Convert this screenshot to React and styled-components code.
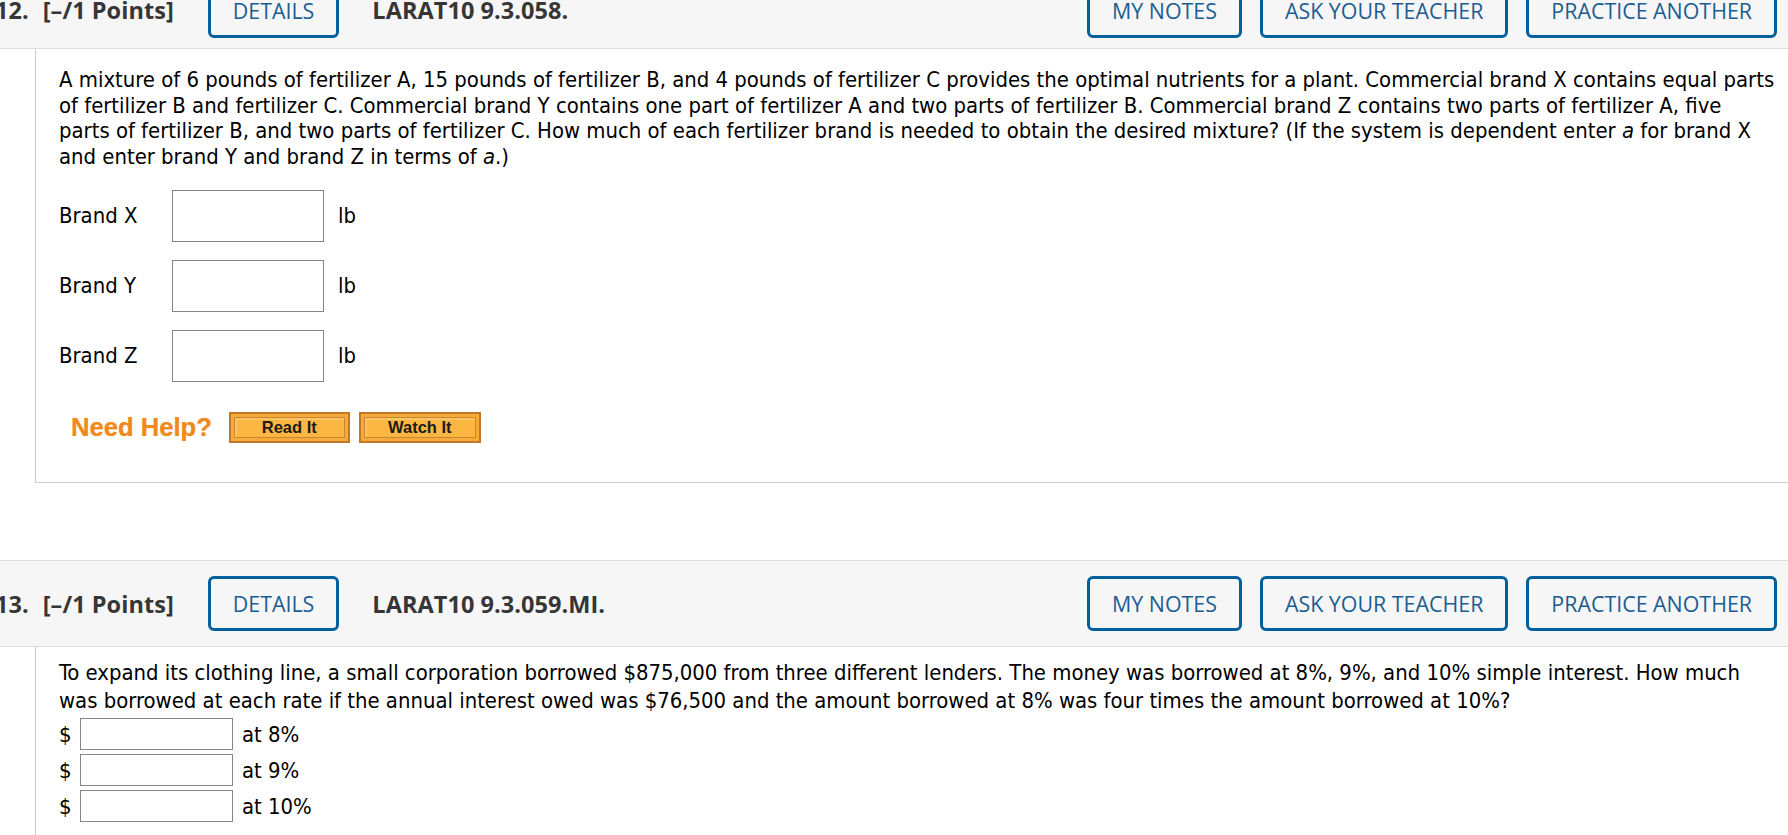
import React from 'react';
import styled, { createGlobalStyle } from 'styled-components';

const GlobalStyle = createGlobalStyle`
  html, body {
    margin: 0;
    padding: 0;
    background: #ffffff;
  }
  body {
    font-family: "DejaVu Sans Condensed", "DejaVu Sans", Verdana, sans-serif;
    color: #000;
    overflow: hidden;
  }
`;

const Page = styled.div`
  margin-top: -29px;
`;

const Question = styled.section`
  margin-bottom: ${(p) => (p.$last ? '0' : '77px')};
`;

const Header = styled.div`
  box-sizing: border-box;
  display: flex;
  align-items: center;
  height: ${(p) => p.$h}px;
  padding-right: 11px;
  background: #f6f6f6;
  border-top: 1px solid #dddddd;
  border-bottom: 1px solid #dddddd;
  font-family: "Open Sans", "Liberation Sans", sans-serif;
  color: #363636;
  white-space: nowrap;
`;

const HeadText = styled.span`
  margin-left: ${(p) => p.$ml};
  font-size: 23.5px;
  font-weight: 700;
  letter-spacing: 0.05px;
`;

const OutlineButton = styled.button`
  box-sizing: border-box;
  height: 55px;
  padding: 0 22px;
  margin-left: ${(p) => p.$ml || '0'};
  background: transparent;
  border: 3px solid #00609c;
  border-radius: 6px;
  color: #1b5d93;
  font-family: "Open Sans", "Liberation Sans", sans-serif;
  font-size: 21.4px;
  font-weight: 500;
  text-transform: uppercase;
  cursor: pointer;
`;

const RightGroup = styled.div`
  margin-left: auto;
  display: flex;
  gap: 18px;
`;

const Content = styled.div`
  margin-left: 35px;
  border-left: 1px solid #cccccc;
  border-bottom: ${(p) => (p.$open ? 'none' : '1px solid #cccccc')};
  padding: ${(p) => p.$pad};
  font-size: 21.9px;
`;

const Prompt = styled.div`
  line-height: ${(p) => p.$lh}px;
  white-space: nowrap;
`;

const Line = styled.span`
  display: block;
`;

const Var = styled.i`
  font-style: italic;
`;

const BrandGrid = styled.div`
  display: grid;
  grid-template-columns: 99px 152px auto;
  column-gap: 14px;
  row-gap: 18px;
  align-items: center;
  margin-top: 21px;
`;

const Label = styled.span`
  line-height: 1;
`;

const Field = styled.input`
  box-sizing: border-box;
  width: ${(p) => p.$w}px;
  height: ${(p) => p.$h}px;
  margin: 0;
  border: 1px solid #858585;
  background: #fff;
  font-size: 18px;
`;

const HelpRow = styled.div`
  display: flex;
  align-items: center;
  margin-top: 30px;
  padding-left: 12px;
`;

const NeedHelp = styled.span`
  font-family: "Liberation Sans", Arial, sans-serif;
  font-size: 25.6px;
  font-weight: 700;
  color: #f08a1c;
  text-shadow: 0 0 1px rgba(240, 138, 28, 0.6);
  margin-right: 17px;
`;

const HelpButton = styled.button`
  box-sizing: border-box;
  width: ${(p) => p.$w}px;
  height: 31px;
  margin-right: 9px;
  padding: 0;
  border: 2px solid #c27729;
  background: #fbb742;
  box-shadow: inset 0 0 0 3px #f8aa38, inset 0 0 0 4px #c98534,
    inset 1px 1px 0 5px #fcc561;
  font-family: "Liberation Sans", Arial, sans-serif;
  font-size: 16.5px;
  font-weight: 700;
  color: #1c1c1c;
  cursor: pointer;
`;

const MoneyList = styled.div`
  display: flex;
  flex-direction: column;
  gap: 4px;
  margin-top: 3px;
`;

const MoneyRow = styled.div`
  display: flex;
  align-items: center;
`;

const Dollar = styled.span`
  width: 21px;
`;

const Rate = styled.span`
  margin-left: 9px;
`;

function QuestionHeader({ num, code, h }) {
  return (
    <Header $h={h}>
      <HeadText $ml="-5px">{num}.</HeadText>
      <HeadText $ml="14px">[–/1 Points]</HeadText>
      <OutlineButton $ml="34px">Details</OutlineButton>
      <HeadText $ml="33px">{code}</HeadText>
      <RightGroup>
        <OutlineButton>My Notes</OutlineButton>
        <OutlineButton>Ask Your Teacher</OutlineButton>
        <OutlineButton>Practice Another</OutlineButton>
      </RightGroup>
    </Header>
  );
}

const brands = ['X', 'Y', 'Z'];
const rates = ['8%', '9%', '10%'];

export default function App() {
  return (
    <>
      <GlobalStyle />
      <Page>
        <Question>
          <QuestionHeader num={12} code="LARAT10 9.3.058." h={78} />
          <Content $pad="18px 0 39px 23px">
            <Prompt $lh={25.5}>
              <Line>
                A mixture of 6 pounds of fertilizer A, 15 pounds of fertilizer B, and 4 pounds of fertilizer C provides the optimal nutrients for a plant. Commercial brand X contains equal parts
              </Line>
              <Line>
                of fertilizer B and fertilizer C. Commercial brand Y contains one part of fertilizer A and two parts of fertilizer B. Commercial brand Z contains two parts of fertilizer A, five
              </Line>
              <Line>
                parts of fertilizer B, and two parts of fertilizer C. How much of each fertilizer brand is needed to obtain the desired mixture? (If the system is dependent enter <Var>a</Var> for brand X
              </Line>
              <Line>
                and enter brand Y and brand Z in terms of <Var>a</Var>.)
              </Line>
            </Prompt>
            <BrandGrid>
              {brands.map((b) => (
                <React.Fragment key={b}>
                  <Label>Brand {b}</Label>
                  <Field $w={152} $h={52} />
                  <Label>lb</Label>
                </React.Fragment>
              ))}
            </BrandGrid>
            <HelpRow>
              <NeedHelp>Need Help?</NeedHelp>
              <HelpButton $w={121}>Read It</HelpButton>
              <HelpButton $w={122}>Watch It</HelpButton>
            </HelpRow>
          </Content>
        </Question>
        <Question $last>
          <QuestionHeader num={13} code="LARAT10 9.3.059.MI." h={87} />
          <Content $open $pad="12px 0 40px 23px">
            <Prompt $lh={28}>
              <Line>
                To expand its clothing line, a small corporation borrowed $875,000 from three different lenders. The money was borrowed at 8%, 9%, and 10% simple interest. How much
              </Line>
              <Line>
                was borrowed at each rate if the annual interest owed was $76,500 and the amount borrowed at 8% was four times the amount borrowed at 10%?
              </Line>
            </Prompt>
            <MoneyList>
              {rates.map((r) => (
                <MoneyRow key={r}>
                  <Dollar>$</Dollar>
                  <Field $w={153} $h={32} />
                  <Rate>at {r}</Rate>
                </MoneyRow>
              ))}
            </MoneyList>
          </Content>
        </Question>
      </Page>
    </>
  );
}
